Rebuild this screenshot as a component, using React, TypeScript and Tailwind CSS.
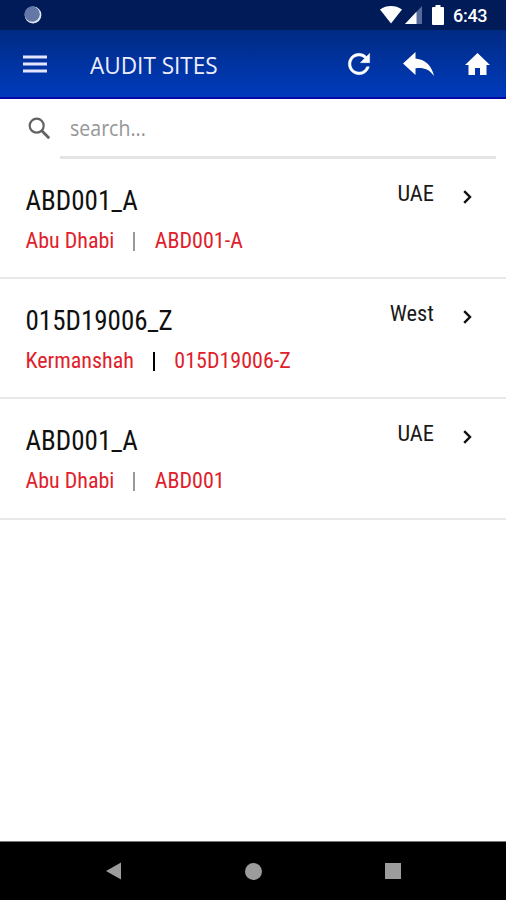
import React from "react";

type Site = {
  name: string;
  city: string;
  code: string;
  region: string;
  divider: string;
};

const sites: Site[] = [
  { name: "ABD001_A", city: "Abu Dhabi", code: "ABD001-A", region: "UAE", divider: "bg-[#999]" },
  { name: "015D19006_Z", city: "Kermanshah", code: "015D19006-Z", region: "West", divider: "bg-black" },
  { name: "ABD001_A", city: "Abu Dhabi", code: "ABD001", region: "UAE", divider: "bg-[#999]" },
];

const condensed = "font-['Roboto_Condensed',Roboto,sans-serif] [font-stretch:75%]";

function StatusBar() {
  return (
    <div className="flex h-[30px] items-center bg-[#001b57] pl-6 pr-[18px]">
      <svg className="h-[18px] w-[18px]" viewBox="0 0 18 18">
        <circle cx="9" cy="9" r="8.4" fill="#e1e8f5" />
        <circle cx="8.2" cy="8.2" r="7.6" fill="#6478a8" />
      </svg>
      <svg className="ml-auto h-[18px] w-[22px]" viewBox="0 0 22 18">
        <path d="M0 3.4C6.5-1.1 15.5-1.1 22 3.4L11 17.5Z" fill="#fff" />
      </svg>
      <svg className="ml-[3px] h-[18px] w-[17px]" viewBox="0 0 17 18">
        <path d="M17 0V18H0Z" fill="#566b9b" />
        <path d="M11.5 5.8V18H0Z" fill="#fff" />
      </svg>
      <svg className="ml-2.5 h-5 w-3" viewBox="0 0 12 20">
        <path d="M3.5 0h5v2H11q1 0 1 1v16q0 1-1 1H1q-1 0-1-1V3q0-1 1-1h2.5Z" fill="#fff" />
      </svg>
      <span className="relative top-px ml-[9px] w-[35px] whitespace-nowrap font-[Roboto,sans-serif] text-[18px] font-medium leading-none tracking-[-0.3px] text-white">
        6:43
      </span>
    </div>
  );
}

function AppBar() {
  return (
    <header className="flex h-[69px] items-center border-b-2 border-[#0009a5] bg-linear-to-b from-[#002b84] to-[#003bbd] pl-[23px] pr-4 text-white">
      <svg className="h-[18px] w-6" viewBox="0 0 24 18" fill="#e4e5ff">
        <path d="M0 .5h24v3H0zM0 7.5h24v3H0zM0 14.5h24v3H0z" />
      </svg>
      <h1 className="ml-[43px] w-[140px] origin-left scale-x-[.94] whitespace-nowrap pt-0.5 font-['Open_Sans',sans-serif] text-[24px] font-medium leading-none text-[#eeeeff]">
        AUDIT SITES
      </h1>
      <svg className="ml-auto h-8 w-8" viewBox="0 0 24 24" fill="#fff">
        <path d="M17.65 6.35C16.2 4.9 14.21 4 12 4c-4.42 0-7.99 3.58-7.99 8s3.57 8 7.99 8c3.73 0 6.84-2.55 7.73-6h-2.08c-.82 2.33-3.04 4-5.65 4-3.31 0-6-2.69-6-6s2.69-6 6-6c1.66 0 3.14.69 4.22 1.78L13 11h7V4l-2.35 2.35z" stroke="#fff" strokeWidth=".3" />
      </svg>
      <svg className="ml-[28px] h-6 w-[31px]" viewBox="0 0 31 24" fill="#fff">
        <path d="M12.5 6.5V0L0 11.5 12.5 23V16.2C21 15.5 26 17 31 24 29 14.5 23 7.5 12.5 6.5Z" />
      </svg>
      <svg className="ml-[31px] h-[22px] w-[25px]" viewBox="0 0 25 22" fill="#fff">
        <path d="M10 22v-7h5v7h6.5V12H25L12.5 0 0 12h3.5v10Z" />
      </svg>
    </header>
  );
}

function SearchField() {
  return (
    <div className="flex h-[60px] pl-[28px] pr-2.5">
      <svg className="mt-[18px] h-[23px] w-[23px]" viewBox="0 0 23 23" fill="none" stroke="#626262" strokeWidth="2.2">
        <circle cx="8.7" cy="8.7" r="7" />
        <path d="M13.8 13.8l7.4 7.4" strokeWidth="2.8" />
      </svg>
      <div className="ml-[9px] flex-1 border-b-[3px] border-[#e4e4e4] pl-[9.5px]">
        <input
          placeholder="search..."
          className="mt-[13px] block h-8 w-full origin-left scale-x-[.93] bg-transparent font-['Open_Sans',sans-serif] text-[21px] leading-8 outline-none placeholder:text-[#969696]"
        />
      </div>
    </div>
  );
}

function SiteRow({ site }: { site: Site }) {
  return (
    <li className="flex h-[120.2px] border-b-2 border-[#e8e8e8] pl-[25.5px] pr-[34px]">
      <div className="flex-1 whitespace-nowrap pt-[24px]">
        <p className={"text-[27px] leading-9 text-[#101010] " + condensed}>{site.name}</p>
        <div className={"mt-[8px] flex items-center text-[22px] leading-7 text-[#e0202b] " + condensed}>
          <span>{site.city}</span>
          <span className={"ml-[19px] mr-[19.5px] h-[19px] w-[2px] " + site.divider} />
          <span>{site.code}</span>
        </div>
      </div>
      <span className={"mt-[18px] text-[22.5px] leading-8 text-[#1a1a1a] " + condensed}>{site.region}</span>
      <svg className="ml-[29px] mt-[31px] h-[14px] w-[9px]" viewBox="0 0 9 14" fill="none" stroke="#111" strokeWidth="2.4">
        <path d="M1.2 1.2L7 7 1.2 12.8" />
      </svg>
    </li>
  );
}

function NavigationBar() {
  return (
    <nav className="flex h-[59px] items-center justify-between border-t border-[#777] bg-black pl-[106px] pr-[105px]">
      <svg className="h-[18px] w-[15px]" viewBox="0 0 15 18" fill="#9c9c9c">
        <path d="M0 9L15 0.5V17.5Z" />
      </svg>
      <span className="h-[17px] w-[17px] rounded-full bg-[#9c9c9c]" />
      <span className="h-4 w-4 bg-[#9c9c9c]" />
    </nav>
  );
}

export default function App() {
  return (
    <div className="flex h-[900px] w-[506px] flex-col overflow-hidden bg-white">
      <StatusBar />
      <AppBar />
      <SearchField />
      <ul className="flex-1">
        {sites.map((site, i) => (
          <SiteRow key={i} site={site} />
        ))}
      </ul>
      <NavigationBar />
    </div>
  );
}
